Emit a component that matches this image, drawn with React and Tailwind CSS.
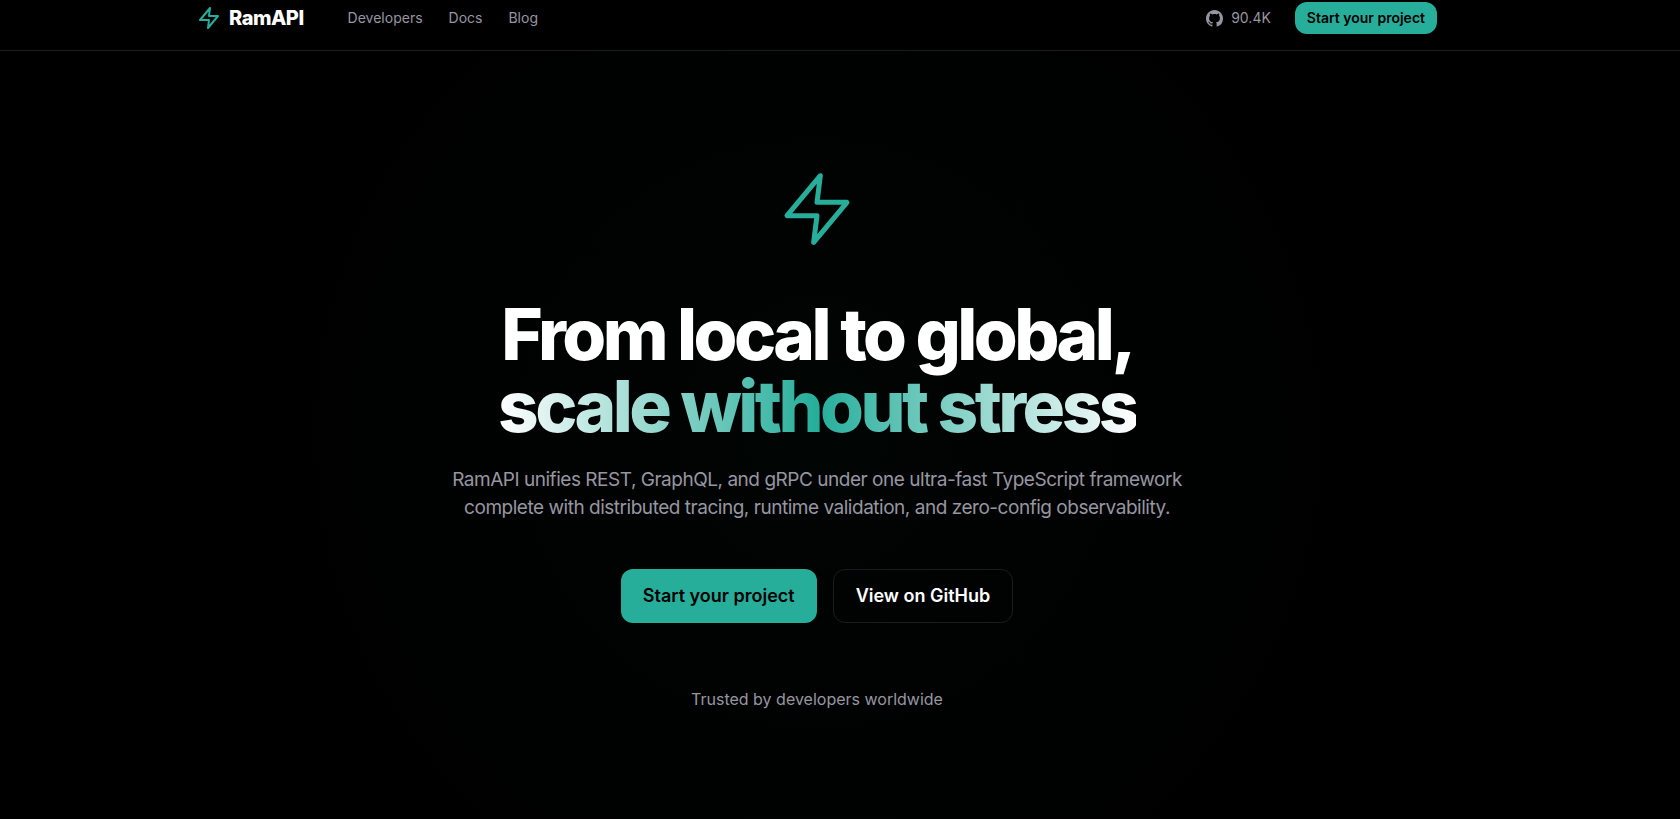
import React from "react";

function Bolt({ className, strokeWidth }) {
  return (
    <svg
      viewBox="0 0 24 24"
      fill="none"
      stroke="currentColor"
      strokeWidth={strokeWidth}
      strokeLinecap="round"
      strokeLinejoin="round"
      className={className}
      aria-hidden="true"
    >
      <path d="M13 2L3 14h9l-1 8 10-12h-9l1-8z" />
    </svg>
  );
}

function GitHubMark({ className }) {
  return (
    <svg viewBox="0 0 16 16" fill="currentColor" className={className} aria-hidden="true">
      <path d="M8 0C3.58 0 0 3.58 0 8c0 3.54 2.29 6.53 5.47 7.59.4.07.55-.17.55-.38 0-.19-.01-.82-.01-1.49-2.01.37-2.53-.49-2.69-.94-.09-.23-.48-.94-.82-1.13-.28-.15-.68-.52-.01-.53.63-.01 1.08.58 1.23.82.72 1.21 1.87.87 2.33.66.07-.52.28-.87.51-1.07-1.78-.2-3.64-.89-3.64-3.95 0-.87.31-1.59.82-2.15-.08-.2-.36-1.02.08-2.12 0 0 .67-.21 2.2.82.64-.18 1.32-.27 2-.27s1.36.09 2 .27c1.53-1.04 2.2-.82 2.2-.82.44 1.1.16 1.92.08 2.12.51.56.82 1.27.82 2.15 0 3.07-1.87 3.75-3.65 3.95.29.25.54.73.54 1.48 0 1.07-.01 1.93-.01 2.2 0 .21.15.46.55.38A8.01 8.01 0 0 0 16 8c0-4.42-3.58-8-8-8z" />
    </svg>
  );
}

const links = ["Developers", "Docs", "Blog"];

export default function App() {
  return (
    <div className="flex min-h-screen flex-col bg-black font-['Inter',sans-serif] text-white antialiased">
      <header className="border-b border-[#1c1c1e] pt-[2px] pr-[46px] pb-4">
        <div className="mx-auto flex max-w-[1240px] items-center justify-between">
          <div className="flex items-center gap-11">
            <a href="#" className="flex items-center gap-2 text-xl leading-8 font-extrabold tracking-tight">
              <Bolt className="size-6 text-[#26ae9b]" strokeWidth={2} />
              RamAPI
            </a>
            <nav className="flex gap-[26px] text-sm text-[#9796a0]">
              {links.map((l) => (
                <a key={l} href="#">
                  {l}
                </a>
              ))}
            </nav>
          </div>
          <div className="flex items-center gap-6">
            <a href="#" className="flex items-center gap-2 text-sm text-[#9796a0]">
              <GitHubMark className="size-[17px]" />
              90.4K
            </a>
            <button type="button" className="h-8 rounded-xl bg-[#26ae9b] px-3 text-sm font-semibold text-black">
              Start your project
            </button>
          </div>
        </div>
      </header>

      <main className="flex grow flex-col items-center bg-[radial-gradient(circle_at_817px_50%,#010504_0px,#000000_520px)] pt-[118px] pr-[46px] pb-16 text-center">
        <Bolt className="size-20 text-[#26ae9b]" strokeWidth={1.5} />
        <h1 className="mt-[49px] text-[71px] leading-[72px] font-extrabold tracking-tighter">
          <span className="block">From local to global,</span>
          <span className="inline-block bg-linear-to-r/srgb from-white via-[#26ae9b] to-white bg-clip-text text-transparent">
            scale without stress
          </span>
        </h1>
        <p className="mt-6 text-[19px] leading-7 tracking-tight text-[#9796a0]">
          RamAPI unifies REST, GraphQL, and gRPC under one ultra-fast TypeScript framework
          <br />
          complete with distributed tracing, runtime validation, and zero-config observability.
        </p>
        <div className="mt-[47px] flex gap-4 text-lg font-semibold">
          <button type="button" className="h-[54px] rounded-xl bg-[#26ae9b] px-[22px] text-black">
            Start your project
          </button>
          <button type="button" className="h-[54px] rounded-xl border border-[#1c1c1e] px-[22px]">
            View on GitHub
          </button>
        </div>
        <p className="mt-16 text-base text-[#9796a0]">Trusted by developers worldwide</p>
      </main>
    </div>
  );
}
